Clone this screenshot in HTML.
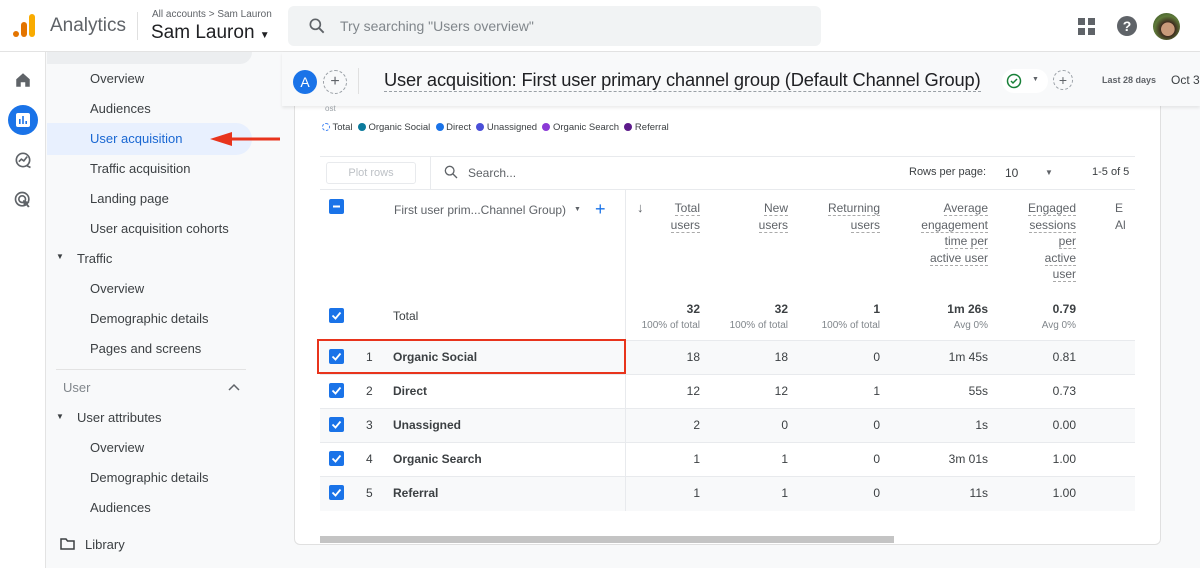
<!DOCTYPE html>
<html><head><meta charset="utf-8"><style>
*{box-sizing:border-box;margin:0;padding:0}
body{width:1200px;height:568px;overflow:hidden;background:#f8f9fa;font-family:"Liberation Sans",Arial,sans-serif;color:#3c4043;position:relative}
.a{position:absolute}
.hdr{left:0;top:0;width:1200px;height:52px;background:#fff;border-bottom:1px solid #e3e3e3}
.rail{left:0;top:52px;width:46px;height:516px;background:#fff;border-right:1px solid #e3e3e3}
.nav{left:47px;top:52px;width:235px;height:516px;background:#f8f9fa}
.ni{position:absolute;font-size:13px;color:#3c4043}
.card{left:294px;top:96px;width:867px;height:449px;background:#fff;border:1px solid #e0e0e0;border-radius:6px}
.cb{position:absolute;width:15px;height:15px;background:#1a73e8;border-radius:2px}
.cb svg{position:absolute;left:1px;top:1px}
.hd{font-size:12px;color:#5f6368;text-align:right;line-height:16.5px}
.hd span{border-bottom:1px dashed #aaa}
.row{position:absolute;left:320px;width:815px;height:34px;border-bottom:1px solid #e8eaed}
.num{position:absolute;font-size:12px;color:#3c4043;text-align:right;width:80px}
</style></head><body>
<div class="a hdr"></div>
<div class="a" style="left:13px;top:31px;width:6px;height:6px;border-radius:3px;background:#e37400"></div>
<div class="a" style="left:21px;top:22px;width:6px;height:15px;border-radius:3px;background:#e37400"></div>
<div class="a" style="left:29px;top:14px;width:6px;height:23px;border-radius:3px;background:#f9ab00"></div>
<div class="a" style="left:50px;top:15px;font-size:19px;color:#5f6368">Analytics</div>
<div class="a" style="left:137px;top:12px;width:1px;height:28px;background:#e0e0e0"></div>
<div class="a" style="left:152px;top:9px;font-size:10px;color:#5f6368">All accounts &gt; Sam Lauron</div>
<div class="a" style="left:151px;top:22px;font-size:19px;color:#202124">Sam Lauron <span style="font-size:10px">▼</span></div>
<div class="a" style="left:288px;top:6px;width:533px;height:40px;background:#f1f3f4;border-radius:6px"></div>
<svg class="a" style="left:307px;top:16px" width="20" height="20" viewBox="0 0 24 24"><circle cx="10" cy="10" r="6" fill="none" stroke="#5f6368" stroke-width="2"/><path d="M14.5 14.5L20 20" stroke="#5f6368" stroke-width="2.2"/></svg>
<div class="a" style="left:340px;top:18px;font-size:14px;color:#80868b">Try searching "Users overview"</div>
<svg class="a" style="left:1078px;top:18px" width="17" height="17"><rect x="0" y="0" width="7" height="7" fill="#5f6368"/><rect x="10" y="0" width="7" height="7" fill="#5f6368"/><rect x="0" y="10" width="7" height="7" fill="#5f6368"/><rect x="10" y="10" width="7" height="7" fill="#5f6368"/></svg>
<div class="a" style="left:1117px;top:16px;width:20px;height:20px;border-radius:10px;background:#5f6368;color:#fff;font-size:14px;font-weight:bold;text-align:center;line-height:20px">?</div>
<div class="a" style="left:1153px;top:13px;width:27px;height:27px;border-radius:14px;background:radial-gradient(circle at 55% 60%,#c89a7a 0 30%,#3d2a1e 32%,#5f7a3a 60%,#2e4a22)"></div>

<div class="a rail"></div>
<svg class="a" style="left:14px;top:71px" width="18" height="18" viewBox="0 0 24 24"><path d="M12 3L3 11v10h6v-6h6v6h6V11z" fill="#5f6368"/></svg>
<div class="a" style="left:8px;top:105px;width:30px;height:30px;border-radius:15px;background:#1a73e8"></div>
<svg class="a" style="left:16px;top:113px" width="14" height="14"><rect x="0" y="0" width="14" height="14" rx="2" fill="#fff"/><rect x="3" y="6" width="1.6" height="5" fill="#1a73e8"/><rect x="6.2" y="3" width="1.6" height="8" fill="#1a73e8"/><rect x="9.4" y="8" width="1.6" height="3" fill="#1a73e8"/></svg>
<svg class="a" style="left:13px;top:150px" width="20" height="20" viewBox="0 0 24 24"><circle cx="12" cy="12" r="8" fill="none" stroke="#5f6368" stroke-width="2"/><path d="M7 14l3-3 3 2 4-5" fill="none" stroke="#5f6368" stroke-width="2"/><path d="M17 19l4 2" stroke="#5f6368" stroke-width="2"/></svg>
<svg class="a" style="left:13px;top:190px" width="20" height="20" viewBox="0 0 24 24"><circle cx="11" cy="11" r="8" fill="none" stroke="#5f6368" stroke-width="2"/><circle cx="11" cy="11" r="4" fill="none" stroke="#5f6368" stroke-width="2"/><path d="M12 12l8 3-3 1 3 4-2 1-3-4-2 3z" fill="#5f6368"/></svg>

<div class="a nav"></div>
<div class="a" style="left:47px;top:52px;width:205px;height:12px;background:#eceef0;border-radius:0 0 12px 0"></div>
<div class="a" style="left:47px;top:123px;width:205px;height:32px;background:#e8f0fe;border-radius:0 16px 16px 0"></div>
<div class="ni" style="left:90px;top:71px">Overview</div>
<div class="ni" style="left:90px;top:101px">Audiences</div>
<div class="ni" style="left:90px;top:131px;color:#1967d2">User acquisition</div>
<svg class="a" style="left:208px;top:131px" width="74" height="16"><path d="M72 8H20" stroke="#e8341c" stroke-width="3"/><path d="M2 8L24 1v14z" fill="#e8341c"/></svg>
<div class="ni" style="left:90px;top:161px">Traffic acquisition</div>
<div class="ni" style="left:90px;top:191px">Landing page</div>
<div class="ni" style="left:90px;top:221px">User acquisition cohorts</div>
<div class="ni" style="left:56px;top:252px;font-size:8px">▼</div>
<div class="ni" style="left:77px;top:251px">Traffic</div>
<div class="ni" style="left:90px;top:281px">Overview</div>
<div class="ni" style="left:90px;top:311px">Demographic details</div>
<div class="ni" style="left:90px;top:341px">Pages and screens</div>
<div class="a" style="left:56px;top:369px;width:190px;height:1px;background:#e3e3e3"></div>
<div class="ni" style="left:63px;top:380px;color:#80868b">User</div>
<svg class="a" style="left:228px;top:383px" width="12" height="8"><path d="M1 7l5-5 5 5" fill="none" stroke="#5f6368" stroke-width="1.5"/></svg>
<div class="ni" style="left:56px;top:412px;font-size:8px">▼</div>
<div class="ni" style="left:77px;top:410px">User attributes</div>
<div class="ni" style="left:90px;top:440px">Overview</div>
<div class="ni" style="left:90px;top:470px">Demographic details</div>
<div class="ni" style="left:90px;top:500px">Audiences</div>
<svg class="a" style="left:60px;top:537px" width="15" height="13"><path d="M1 2h5l1.5 2H14v8H1z" fill="none" stroke="#3c4043" stroke-width="1.5"/></svg>
<div class="ni" style="left:85px;top:537px">Library</div>

<div class="a card"></div>
<div class="a" style="left:282px;top:52px;width:918px;height:54px;background:#f8f9fa;box-shadow:0 2px 3px rgba(0,0,0,.08)"></div>
<div class="a" style="left:293px;top:70px;width:24px;height:24px;border-radius:12px;background:#1a73e8;color:#fff;font-size:14px;text-align:center;line-height:24px">A</div>
<div class="a" style="left:323px;top:70px;width:24px;height:24px;border-radius:12px;border:1px dashed #9aa0a6;color:#5f6368;font-size:16px;text-align:center;line-height:21px">+</div>
<div class="a" style="left:358px;top:68px;width:1px;height:26px;background:#e0e0e0"></div>
<div class="a" style="left:384px;top:69px;font-size:18.3px;color:#202124;border-bottom:1px dashed #9aa0a6;line-height:22px;white-space:nowrap;letter-spacing:-0.15px">User acquisition: First user primary channel group (Default Channel Group)</div>
<div class="a" style="left:1002px;top:69px;width:46px;height:24px;border-radius:12px;background:#fff"></div>
<svg class="a" style="left:1006px;top:73px" width="16" height="16"><circle cx="8" cy="8" r="6.5" fill="none" stroke="#188038" stroke-width="1.5"/><path d="M5 8l2 2 4-4" fill="none" stroke="#188038" stroke-width="1.5"/></svg>
<div class="a" style="left:1032px;top:76px;font-size:7px;color:#5f6368">▼</div>
<div class="a" style="left:1053px;top:70px;width:20px;height:20px;border-radius:10px;border:1px dashed #9aa0a6;color:#5f6368;font-size:14px;text-align:center;line-height:18px">+</div>
<div class="a" style="left:1102px;top:75px;font-size:9px;font-weight:bold;color:#5f6368">Last 28 days</div>
<div class="a" style="left:1171px;top:73px;font-size:12px;color:#3c4043">Oct 3</div>

<div class="a" style="left:325px;top:104px;font-size:8px;color:#9aa0a6">ost</div>
<div class="a" style="left:322px;top:122px;font-size:9.5px;color:#3c4043;white-space:nowrap">
<span style="display:inline-block;width:8px;height:8px;border-radius:4px;border:1px dashed #4285f4;vertical-align:-1px"></span> Total&nbsp;
<span style="display:inline-block;width:8px;height:8px;border-radius:4px;background:#0b7a9c;vertical-align:-1px"></span> Organic Social&nbsp;
<span style="display:inline-block;width:8px;height:8px;border-radius:4px;background:#1a73e8;vertical-align:-1px"></span> Direct&nbsp;
<span style="display:inline-block;width:8px;height:8px;border-radius:4px;background:#4a4fd8;vertical-align:-1px"></span> Unassigned&nbsp;
<span style="display:inline-block;width:8px;height:8px;border-radius:4px;background:#8b3ad6;vertical-align:-1px"></span> Organic Search&nbsp;
<span style="display:inline-block;width:8px;height:8px;border-radius:4px;background:#5c1a8a;vertical-align:-1px"></span> Referral</div>

<div class="a" style="left:320px;top:156px;width:815px;height:34px;border-top:1px solid #e8eaed;border-bottom:1px solid #e8eaed"></div>
<div class="a" style="left:430px;top:156px;width:1px;height:34px;background:#e8eaed"></div>
<div class="a" style="left:326px;top:162px;width:90px;height:22px;border:1px solid #e8eaed;border-radius:3px;font-size:11px;color:#bdc1c6;text-align:center;line-height:20px">Plot rows</div>
<svg class="a" style="left:443px;top:164px" width="16" height="16" viewBox="0 0 24 24"><circle cx="10" cy="10" r="6.5" fill="none" stroke="#5f6368" stroke-width="2"/><path d="M15 15l6 6" stroke="#5f6368" stroke-width="2"/></svg>
<div class="a" style="left:468px;top:166px;font-size:12px;color:#5f6368">Search...</div>
<div class="a" style="left:909px;top:166px;font-size:11px;color:#3c4043">Rows per page:</div>
<div class="a" style="left:1005px;top:166px;font-size:12px;color:#3c4043">10</div>
<div class="a" style="left:1045px;top:168px;font-size:8px;color:#5f6368">▼</div>
<div class="a" style="left:1092px;top:166px;font-size:11px;color:#3c4043">1-5 of 5</div>

<div class="a" style="left:625px;top:190px;width:1px;height:320px;background:#e8eaed"></div>
<div class="cb" style="left:329px;top:199px"><svg width="13" height="13"><path d="M3 6.5h7" stroke="#fff" stroke-width="2"/></svg></div>
<div class="a" style="left:394px;top:203px;font-size:12px;color:#5f6368">First user prim...Channel Group)</div>
<div class="a" style="left:574px;top:206px;font-size:7px;color:#5f6368">▼</div>
<div class="a" style="left:595px;top:199px;font-size:18px;color:#1a73e8;line-height:20px">+</div>
<div class="a" style="left:637px;top:200px;font-size:13px;color:#5f6368">↓</div>
<div class="a hd" style="left:620px;top:200px;width:80px"><span>Total</span><br><span>users</span></div>
<div class="a hd" style="left:708px;top:200px;width:80px"><span>New</span><br><span>users</span></div>
<div class="a hd" style="left:790px;top:200px;width:90px"><span>Returning</span><br><span>users</span></div>
<div class="a hd" style="left:888px;top:200px;width:100px"><span>Average</span><br><span>engagement</span><br><span>time per</span><br><span>active user</span></div>
<div class="a hd" style="left:996px;top:200px;width:80px"><span>Engaged</span><br><span>sessions</span><br><span>per</span><br><span>active</span><br><span>user</span></div>
<div class="a hd" style="left:1115px;top:200px;width:20px;text-align:left;overflow:hidden">E<br>Al</div>

<div class="cb" style="left:329px;top:308px"><svg width="13" height="13"><path d="M2.5 6.5l3 3 5-6" fill="none" stroke="#fff" stroke-width="1.8"/></svg></div>
<div class="a" style="left:393px;top:309px;font-size:12px;color:#3c4043">Total</div>
<div class="num" style="left:620px;top:302px;font-weight:bold">32</div>
<div class="num" style="left:708px;top:302px;font-weight:bold">32</div>
<div class="num" style="left:800px;top:302px;font-weight:bold">1</div>
<div class="num" style="left:908px;top:302px;font-weight:bold">1m 26s</div>
<div class="num" style="left:996px;top:302px;font-weight:bold">0.79</div>
<div class="num" style="left:620px;top:320px;font-size:10px;color:#80868b">100% of total</div>
<div class="num" style="left:708px;top:320px;font-size:10px;color:#80868b">100% of total</div>
<div class="num" style="left:800px;top:320px;font-size:10px;color:#80868b">100% of total</div>
<div class="num" style="left:908px;top:320px;font-size:10px;color:#80868b">Avg 0%</div>
<div class="num" style="left:996px;top:320px;font-size:10px;color:#80868b">Avg 0%</div>
<div class="a" style="left:320px;top:340px;width:815px;height:1px;background:#e8eaed"></div>

<div class="row" style="top:341px;background:#f8f9fa"></div>
<div class="row" style="top:375px;background:#fff"></div>
<div class="row" style="top:409px;background:#f8f9fa"></div>
<div class="row" style="top:443px;background:#fff"></div>
<div class="row" style="top:477px;background:#f8f9fa;border-bottom:none"></div>
<div class="a" style="left:625px;top:341px;width:1px;height:170px;background:#e8eaed"></div>

<div class="cb" style="left:329px;top:349px"><svg width="13" height="13"><path d="M2.5 6.5l3 3 5-6" fill="none" stroke="#fff" stroke-width="1.8"/></svg></div>
<div class="cb" style="left:329px;top:383px"><svg width="13" height="13"><path d="M2.5 6.5l3 3 5-6" fill="none" stroke="#fff" stroke-width="1.8"/></svg></div>
<div class="cb" style="left:329px;top:417px"><svg width="13" height="13"><path d="M2.5 6.5l3 3 5-6" fill="none" stroke="#fff" stroke-width="1.8"/></svg></div>
<div class="cb" style="left:329px;top:451px"><svg width="13" height="13"><path d="M2.5 6.5l3 3 5-6" fill="none" stroke="#fff" stroke-width="1.8"/></svg></div>
<div class="cb" style="left:329px;top:485px"><svg width="13" height="13"><path d="M2.5 6.5l3 3 5-6" fill="none" stroke="#fff" stroke-width="1.8"/></svg></div>

<div class="a" style="left:366px;top:350px;font-size:12px">1</div>
<div class="a" style="left:366px;top:384px;font-size:12px">2</div>
<div class="a" style="left:366px;top:418px;font-size:12px">3</div>
<div class="a" style="left:366px;top:452px;font-size:12px">4</div>
<div class="a" style="left:366px;top:486px;font-size:12px">5</div>
<div class="a" style="left:393px;top:350px;font-size:12px;font-weight:bold">Organic Social</div>
<div class="a" style="left:393px;top:384px;font-size:12px;font-weight:bold">Direct</div>
<div class="a" style="left:393px;top:418px;font-size:12px;font-weight:bold">Unassigned</div>
<div class="a" style="left:393px;top:452px;font-size:12px;font-weight:bold">Organic Search</div>
<div class="a" style="left:393px;top:486px;font-size:12px;font-weight:bold">Referral</div>

<div class="num" style="left:620px;top:350px">18</div><div class="num" style="left:708px;top:350px">18</div><div class="num" style="left:800px;top:350px">0</div><div class="num" style="left:908px;top:350px">1m 45s</div><div class="num" style="left:996px;top:350px">0.81</div>
<div class="num" style="left:620px;top:384px">12</div><div class="num" style="left:708px;top:384px">12</div><div class="num" style="left:800px;top:384px">1</div><div class="num" style="left:908px;top:384px">55s</div><div class="num" style="left:996px;top:384px">0.73</div>
<div class="num" style="left:620px;top:418px">2</div><div class="num" style="left:708px;top:418px">0</div><div class="num" style="left:800px;top:418px">0</div><div class="num" style="left:908px;top:418px">1s</div><div class="num" style="left:996px;top:418px">0.00</div>
<div class="num" style="left:620px;top:452px">1</div><div class="num" style="left:708px;top:452px">1</div><div class="num" style="left:800px;top:452px">0</div><div class="num" style="left:908px;top:452px">3m 01s</div><div class="num" style="left:996px;top:452px">1.00</div>
<div class="num" style="left:620px;top:486px">1</div><div class="num" style="left:708px;top:486px">1</div><div class="num" style="left:800px;top:486px">0</div><div class="num" style="left:908px;top:486px">11s</div><div class="num" style="left:996px;top:486px">1.00</div>

<div class="a" style="left:317px;top:339px;width:309px;height:35px;border:2px solid #e8341c"></div>
<div class="a" style="left:320px;top:536px;width:574px;height:7px;background:#c4c4c4"></div>
</body></html>
